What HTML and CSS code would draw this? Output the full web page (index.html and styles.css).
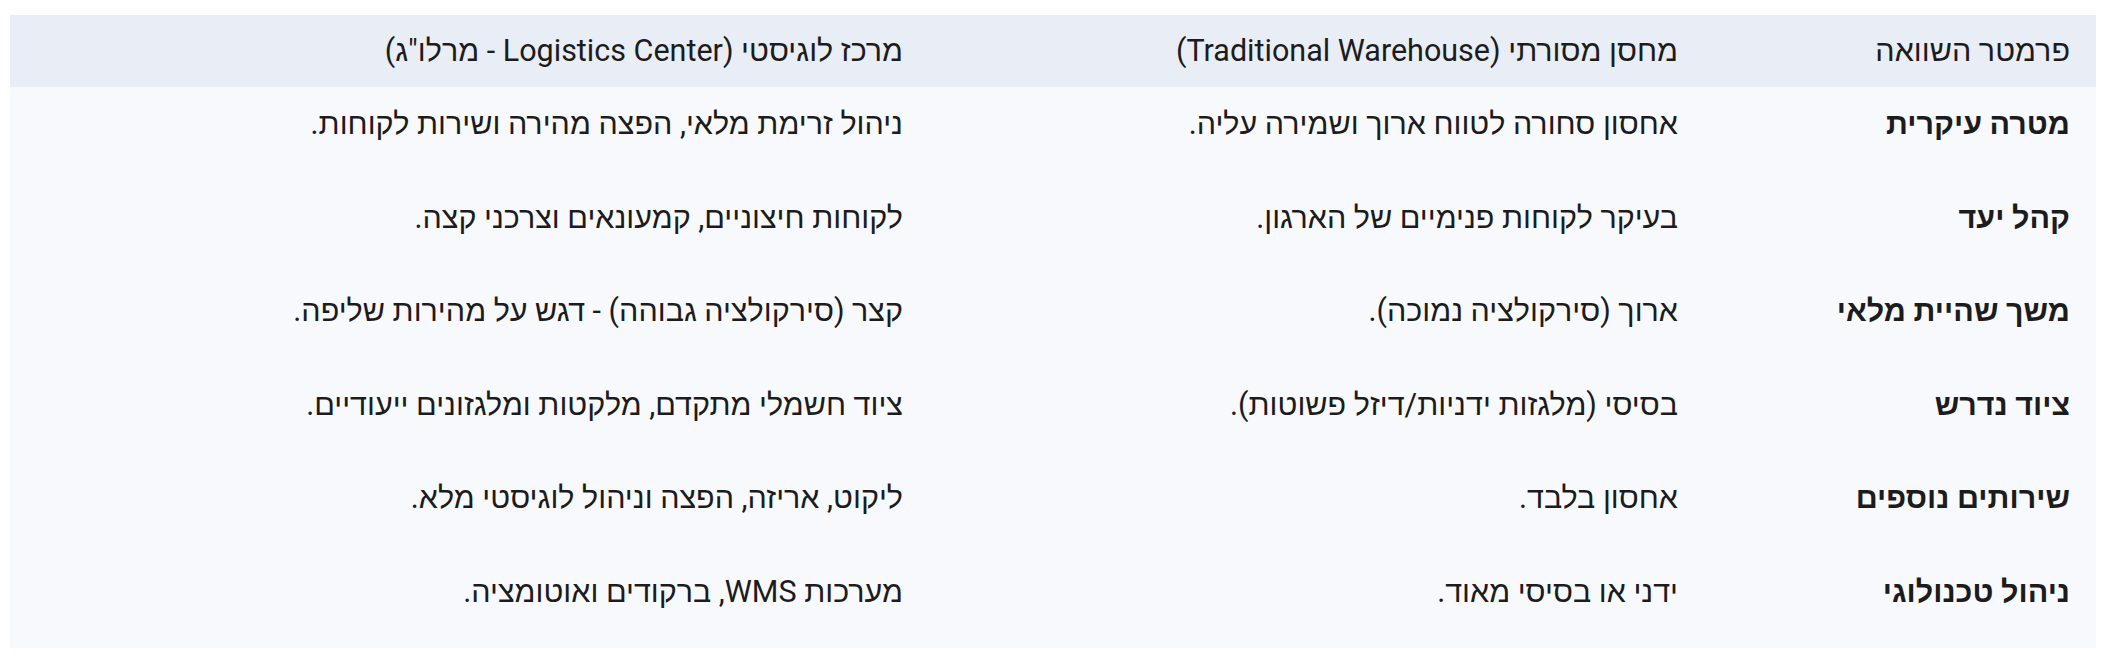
FILE: index.html
```html
<!DOCTYPE html>
<html lang="he" dir="rtl">
<head>
<meta charset="utf-8">
<title>השוואה</title>
<link rel="stylesheet" href="styles.css">
</head>
<body>
<table class="cmp">
  <colgroup>
    <col class="c1">
    <col class="c2">
    <col class="c3">
  </colgroup>
  <thead>
    <tr>
      <th>פרמטר השוואה</th>
      <th>מחסן מסורתי (Traditional Warehouse)</th>
      <th>מרכז לוגיסטי (Logistics Center - מרלו"ג)</th>
    </tr>
  </thead>
  <tbody>
    <tr>
      <td class="key">מטרה עיקרית</td>
      <td>אחסון סחורה לטווח ארוך ושמירה עליה.</td>
      <td>ניהול זרימת מלאי, הפצה מהירה ושירות לקוחות.</td>
    </tr>
    <tr>
      <td class="key">קהל יעד</td>
      <td>בעיקר לקוחות פנימיים של הארגון.</td>
      <td>לקוחות חיצוניים, קמעונאים וצרכני קצה.</td>
    </tr>
    <tr>
      <td class="key">משך שהיית מלאי</td>
      <td>ארוך (סירקולציה נמוכה).</td>
      <td>קצר (סירקולציה גבוהה) - דגש על מהירות שליפה.</td>
    </tr>
    <tr>
      <td class="key">ציוד נדרש</td>
      <td>בסיסי (מלגזות ידניות/דיזל פשוטות).</td>
      <td>ציוד חשמלי מתקדם, מלקטות ומלגזונים ייעודיים.</td>
    </tr>
    <tr>
      <td class="key">שירותים נוספים</td>
      <td>אחסון בלבד.</td>
      <td>ליקוט, אריזה, הפצה וניהול לוגיסטי מלא.</td>
    </tr>
    <tr>
      <td class="key">ניהול טכנולוגי</td>
      <td>ידני או בסיסי מאוד.</td>
      <td>מערכות WMS, ברקודים ואוטומציה.</td>
    </tr>
  </tbody>
</table>
</body>
</html>
```

FILE: styles.css
```css
html, body {
  margin: 0;
  padding: 0;
  background: #ffffff;
}

body {
  font-family: "Roboto", "Liberation Sans", "Open Sans", sans-serif;
  color: #1c1c1c;
}

.cmp {
  margin: 15px 11px 0 10px;
  width: 2086px;
  border-collapse: collapse;
  table-layout: fixed;
  font-size: 30.5px;
  line-height: 40px;
}

.c1 { width: 392px; }
.c2 { width: 775px; }
.c3 { width: 919px; }

.cmp th {
  background: #e9edf5;
  font-weight: 400;
  text-align: right;
  padding: 16px 26px 16px 0;
  white-space: nowrap;
}

.cmp td {
  background: #f8f9fc;
  text-align: right;
  padding: 17px 26px 36.5px 0;
  white-space: nowrap;
}

.cmp td.key {
  font-weight: 700;
}
```
